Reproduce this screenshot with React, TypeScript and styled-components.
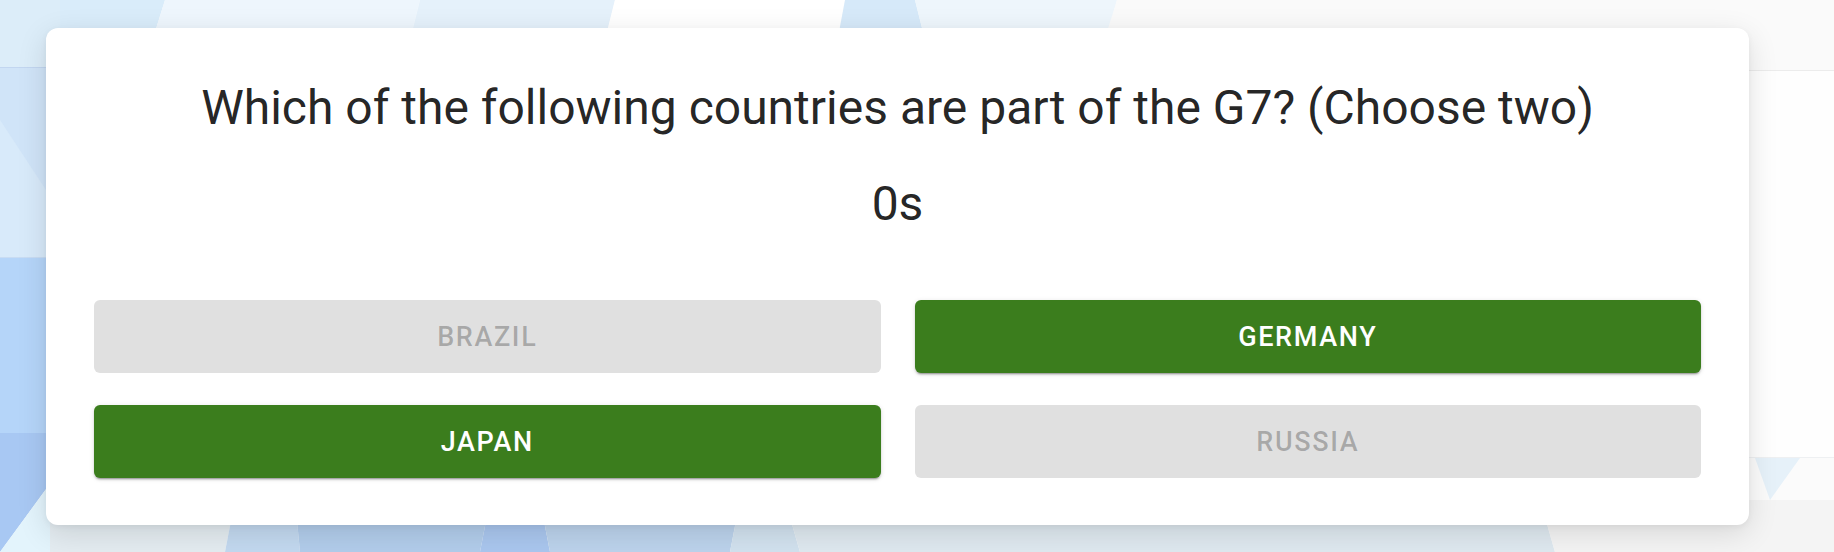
import React from "react";
import styled, { createGlobalStyle } from "styled-components";

const GlobalStyle = createGlobalStyle`
  html, body {
    margin: 0;
    padding: 0;
    background: #ffffff;
    font-family: Roboto, "Liberation Sans", Arial, sans-serif;
  }
`;

const Page = styled.div`
  position: relative;
  width: 1834px;
  height: 552px;
  overflow: hidden;
  box-sizing: border-box;
  padding: 28px 85px 0 46px;
`;

const Backdrop = styled.svg`
  position: absolute;
  inset: 0;
  z-index: 0;
`;

const Card = styled.section`
  position: relative;
  z-index: 1;
  box-sizing: border-box;
  width: 1703px;
  height: 497px;
  padding: 52px 48px 47px;
  background: #ffffff;
  border-radius: 12px;
  box-shadow: 0 8px 30px rgba(0, 0, 0, 0.12), 0 2px 6px rgba(0, 0, 0, 0.05);
  display: flex;
  flex-direction: column;
  align-items: stretch;
`;

const Question = styled.h1`
  margin: 0;
  font-family: Roboto, "Liberation Sans", Arial, sans-serif;
  font-weight: 400;
  font-size: 48px;
  line-height: 56px;
  color: rgba(0, 0, 0, 0.87);
  text-align: center;
`;

const Timer = styled.div`
  margin-top: 40px;
  font-family: Roboto, "Liberation Sans", Arial, sans-serif;
  font-weight: 400;
  font-size: 48px;
  line-height: 56px;
  color: rgba(0, 0, 0, 0.87);
  text-align: center;
`;

const Answers = styled.div`
  margin-top: 68px;
  display: grid;
  grid-template-columns: 1fr 1fr;
  column-gap: 34px;
  row-gap: 32px;
`;

const AnswerButton = styled.button<{ $selected: boolean }>`
  height: 73px;
  border: none;
  border-radius: 6px;
  font-family: Roboto, "Liberation Sans", Arial, sans-serif;
  font-weight: 500;
  font-size: 27px;
  letter-spacing: 0.06em;
  text-transform: uppercase;
  cursor: ${(p) => (p.$selected ? "pointer" : "default")};
  display: flex;
  align-items: center;
  justify-content: center;
  background: ${(p) => (p.$selected ? "#3b7d1d" : "#e0e0e0")};
  color: ${(p) => (p.$selected ? "#ffffff" : "rgba(0, 0, 0, 0.26)")};
  box-shadow: ${(p) =>
    p.$selected
      ? "0px 3px 1px -2px rgba(0,0,0,0.2), 0px 2px 2px 0px rgba(0,0,0,0.14), 0px 1px 5px 0px rgba(0,0,0,0.12)"
      : "none"};
`;

const answers = [
  { label: "Brazil", selected: false },
  { label: "Germany", selected: true },
  { label: "Japan", selected: true },
  { label: "Russia", selected: false },
];

function LowPolyBackground() {
  return (
    <Backdrop width="1834" height="552" viewBox="0 0 1834 552" aria-hidden="true">
      <rect x="0" y="0" width="1834" height="552" fill="#fbfbfb" />
      {/* top strip */}
      <polygon points="0,0 165,0 140,80 0,80" fill="#d9ecfa" />
      <polygon points="165,0 420,0 400,80 140,80" fill="#eef6fd" />
      <polygon points="420,0 615,0 595,80 400,80" fill="#e5f1fb" />
      <polygon points="615,0 845,0 830,80 595,80" fill="#ffffff" />
      <polygon points="845,0 915,0 935,80 830,80" fill="#d6e9f9" />
      <polygon points="915,0 1117,0 1095,80 935,80" fill="#eef6fc" />
      <polygon points="1117,0 1834,0 1834,70 1095,70" fill="#fafafa" />
      {/* left strip */}
      <polygon points="0,0 60,0 60,67 0,67" fill="#dcedf9" />
      <polygon points="0,67 60,67 60,257 0,257" fill="#d0e4f8" />
      <polygon points="0,120 46,190 46,257 0,257" fill="#d8eafa" />
      <line x1="0" y1="67.5" x2="60" y2="67.5" stroke="#c2d6f0" strokeWidth="1" />
      <polygon points="0,257 60,257 60,433 0,433" fill="#b5d5f9" />
      <line x1="0" y1="257.5" x2="60" y2="257.5" stroke="#c8dcf3" strokeWidth="1" />
      <polygon points="0,433 60,433 60,470 0,552" fill="#a8c8f3" />
      <polygon points="0,552 60,470 60,552" fill="#e3f4fc" />
      {/* right strip */}
      <rect x="1749" y="70" width="85" height="387" fill="#fefefe" />
      <line x1="1749" y1="70.5" x2="1834" y2="70.5" stroke="#ececec" strokeWidth="1" />
      <line x1="1749" y1="457.5" x2="1834" y2="457.5" stroke="#eef0f2" strokeWidth="1" />
      <polygon points="1755,458 1800,458 1770,500" fill="#e6f1f9" />
      {/* bottom strip */}
      <polygon points="50,500 235,500 225,552 50,552" fill="#e4ecf1" />
      <polygon points="235,500 295,500 300,552 225,552" fill="#c3d9f0" />
      <polygon points="295,500 490,500 480,552 300,552" fill="#b2cdeb" />
      <polygon points="490,500 540,500 550,552 480,552" fill="#aac7ef" />
      <polygon points="540,500 740,500 730,552 550,552" fill="#bcd3ec" />
      <polygon points="740,500 785,500 800,552 730,552" fill="#d2e2ef" />
      <polygon points="785,500 1540,500 1555,552 800,552" fill="#dfe9f0" />
      <polygon points="1540,500 1834,500 1834,552 1555,552" fill="#f4f4f4" />
    </Backdrop>
  );
}

export default function App() {
  return (
    <>
      <GlobalStyle />
      <Page>
        <LowPolyBackground />
        <Card>
          <Question>Which of the following countries are part of the G7? (Choose two)</Question>
          <Timer>0s</Timer>
          <Answers>
            {answers.map((a) => (
              <AnswerButton key={a.label} $selected={a.selected} disabled={!a.selected}>
                {a.label}
              </AnswerButton>
            ))}
          </Answers>
        </Card>
      </Page>
    </>
  );
}
